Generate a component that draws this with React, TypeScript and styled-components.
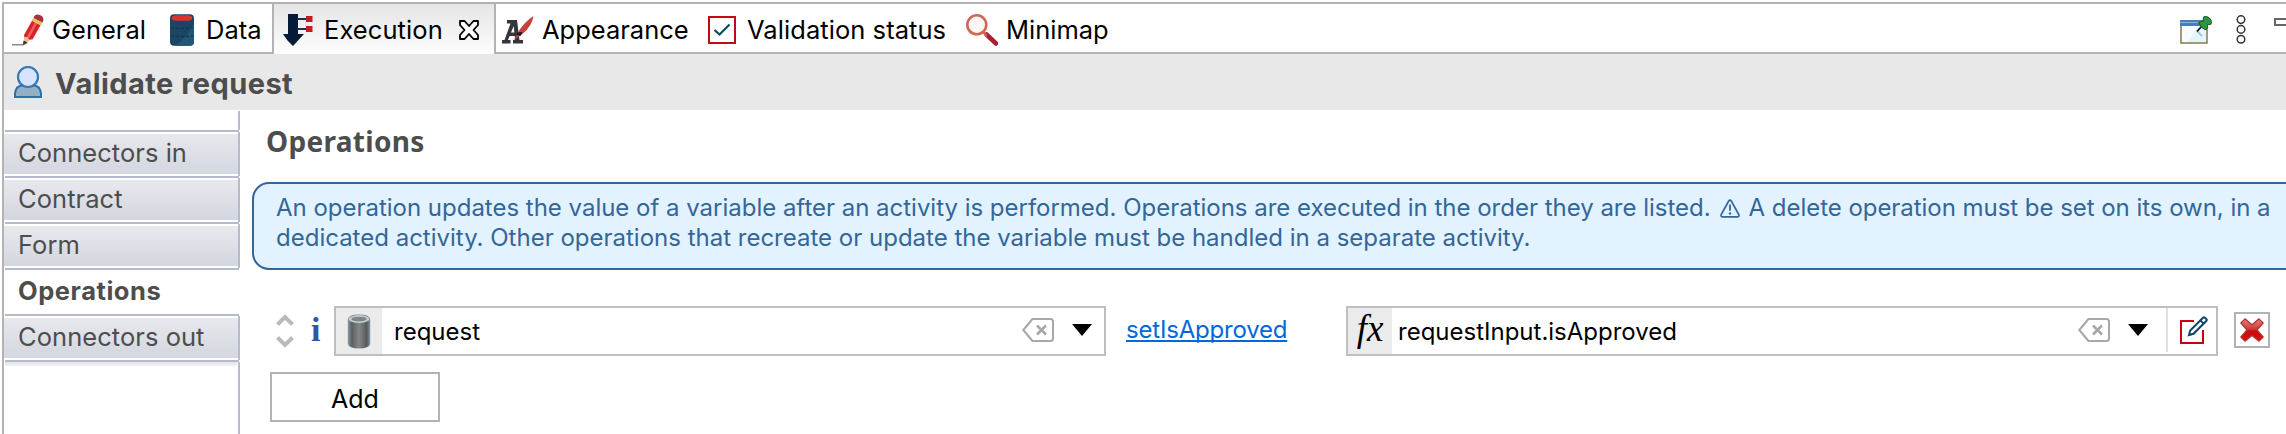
import React from "react";
import styled, { createGlobalStyle } from "styled-components";

const Global = createGlobalStyle`
  html, body { margin: 0; padding: 0; background: #fff; }
  body { width: 2286px; height: 434px; overflow: hidden; font-family: Inter, "Liberation Sans", sans-serif; }
  * { box-sizing: border-box; }
  svg { display: block; flex: none; }
`;

const Label = styled.span<{ $size?: number; $track?: number; $weight?: number; $color?: string; $family?: string }>`
  font-size: ${(p) => p.$size ?? 25.5}px;
  letter-spacing: ${(p) => p.$track ?? 0}px;
  font-weight: ${(p) => p.$weight ?? 400};
  color: ${(p) => p.$color ?? "#000"};
  ${(p) => (p.$family ? `font-family: ${p.$family};` : "")}
  line-height: 30px;
  white-space: pre;
`;

const Panel = styled.div`
  width: 2284px;
  height: 432px;
  margin: 2px 0 0 2px;
  border-top: 2px solid #b3b3b3;
  border-left: 2px solid #b3b3b3;
  display: flex;
  flex-direction: column;
  overflow: hidden;
`;

const TabBar = styled.div`
  height: 50px;
  flex: none;
  display: flex;
`;

const Tab = styled.div<{ $width: number; $pad: number; $gap: number; $active?: boolean }>`
  width: ${(p) => p.$width}px;
  flex: none;
  display: flex;
  align-items: center;
  gap: ${(p) => p.$gap}px;
  padding: 4px 0 ${(p) => (p.$active ? 2 : 0)}px ${(p) => p.$pad}px;
  border: 0 solid #b3b3b3;
  border-width: ${(p) => (p.$active ? "0 2px" : "0 0 2px")};
  background: ${(p) => (p.$active ? "linear-gradient(#e5e5e5, #fdfdfd)" : "#fff")};
`;

const CloseSlot = styled.div`
  margin-left: 5px;
`;

const TabTools = styled.div`
  flex: 1;
  display: flex;
  align-items: center;
  justify-content: flex-end;
  padding-top: 4px;
  border-bottom: 2px solid #b3b3b3;
`;

const ToolGap = styled.div<{ $w: number }>`
  width: ${(p) => p.$w}px;
  flex: none;
`;

const MinimizeSlot = styled.div`
  padding-bottom: 16px;
`;

const Header = styled.div`
  height: 56px;
  flex: none;
  background: #e8e8e8;
  display: flex;
  align-items: center;
  gap: 13px;
  padding-left: 10px;
`;

const Title = styled(Label)`
  padding-top: 3px;
`;

const Body = styled.div`
  flex: 1;
  display: flex;
  min-height: 0;
`;

const Sidebar = styled.div`
  width: 236px;
  flex: none;
  display: flex;
  flex-direction: column;
`;

const SideSpacer = styled.div`
  height: 19px;
  margin-top: 1px;
  flex: none;
  border-right: 2px solid #b6bacd;
`;

const Rule = styled.div`
  height: 2px;
  margin: 0 1px;
  flex: none;
  background: #b6bacd;
`;

const SideItem = styled.div<{ $active?: boolean }>`
  height: 44px;
  flex: none;
  padding: ${(p) => (p.$active ? "0 0 2px 14px" : "2px 0")};
  border-right: ${(p) => (p.$active ? "0" : "2px solid #b6bacd")};
  display: flex;
  align-items: center;
`;

const SideFill = styled.div`
  height: 40px;
  flex: 1;
  padding: 0 0 2px 14px;
  display: flex;
  align-items: center;
  background: linear-gradient(#e8e9ed, #d4d6e0);
`;

const SideShadow = styled.div`
  height: 4px;
  width: 232px;
  margin-left: 1px;
  flex: none;
  background: linear-gradient(#e2e2e2, #f2f2f2);
`;

const SideFoot = styled.div`
  flex: 1;
  display: flex;
  flex-direction: column;
  border-right: 2px solid #b6bacd;
`;

const Content = styled.div`
  flex: 1;
  min-width: 0;
  display: flex;
  flex-direction: column;
`;

const SectionTitle = styled.div`
  height: 72px;
  flex: none;
  padding: 16px 0 0 26px;
`;

const Notice = styled.div`
  height: 88px;
  width: 2080px;
  flex: none;
  margin-left: 12px;
  padding: 9px 0 0 22px;
  border: 2px solid #336699;
  border-radius: 17px;
  background: #e2f3ff;
  display: flex;
  flex-direction: column;
`;

const NoticeLine = styled.div`
  height: 30px;
  display: flex;
  align-items: center;
`;

const OperationRow = styled.div`
  height: 50px;
  flex: none;
  margin-top: 36px;
  padding-left: 36px;
  display: flex;
  align-items: center;
`;

const Mover = styled.div`
  width: 35px;
  display: flex;
  flex-direction: column;
  gap: 10px;
`;

const InfoMark = styled.div`
  width: 23px;
  padding-bottom: 2px;
`;

const Combo = styled.div<{ $width: number }>`
  width: ${(p) => p.$width}px;
  height: 50px;
  flex: none;
  border: 2px solid #bfbfbf;
  display: flex;
  align-items: center;
`;

const TypeCell = styled.div<{ $width: number; $lift?: number }>`
  width: ${(p) => p.$width}px;
  height: 46px;
  flex: none;
  padding-bottom: ${(p) => p.$lift ?? 0}px;
  background: #ebebeb;
  display: flex;
  align-items: center;
  justify-content: center;
`;

const ComboText = styled.div<{ $pad: number }>`
  flex: 1;
  display: flex;
  padding: 1px 0 0 ${(p) => p.$pad}px;
`;

const ComboActions = styled.div<{ $gap: number; $end: number }>`
  display: flex;
  align-items: center;
  gap: ${(p) => p.$gap}px;
  padding: 0 ${(p) => p.$end}px 2px 0;
`;

const EditCell = styled.div`
  width: 50px;
  height: 44px;
  margin-bottom: 2px;
  padding-left: 12px;
  border-left: 2px solid #e0e0e0;
  display: flex;
  align-items: center;
`;

const LinkCell = styled.div`
  width: 240px;
  padding: 0 0 2px 20px;
  flex: none;
  display: flex;
`;

const LinkText = styled(Label)`
  text-decoration: underline;
  text-decoration-thickness: 2px;
  text-underline-offset: 2px;
  text-decoration-skip-ink: none;
`;

const DeleteButton = styled.div`
  width: 36px;
  height: 36px;
  margin-left: 16px;
  margin-bottom: 2px;
  flex: none;
  border: 2px solid #b3b3b3;
  display: flex;
  align-items: center;
  justify-content: center;
`;

const AddButton = styled.div`
  width: 170px;
  height: 50px;
  flex: none;
  margin: 16px 0 0 30px;
  padding-top: 4px;
  border: 2px solid #b3b3b3;
  display: flex;
  align-items: center;
  justify-content: center;
`;

const PencilIcon = () => (
  <svg width="32" height="32" viewBox="0 0 32 32">
    <path d="M0 30.8H11L15 28.5" stroke="#8a8a8a" strokeWidth="1.6" fill="none" />
    <path d="M12 20.5L20 24.5L12 30.5Z" fill="#e9bd94" />
    <path d="M11.5 26.5L15.5 28.5L11 31Z" fill="#3c3030" />
    <path d="M12 21L21 5L29.500 9.500L20.500 25.500L17 25.500L15.500 23L12.500 23Z" fill="#d9232c" />
    <path d="M15 22.500L24 6.500L26 7.500L17 24.500Z" fill="#f0605a" />
    <path d="M20 7L21.500 4L30.500 8.500L29 11.800Z" fill="#e8c05f" />
    <path d="M21.500 4Q22.500 .5 26 .6Q31.500 1.500 31.500 6L30.500 8.500Z" fill="#a8323a" />
  </svg>
);

const DatabaseIcon = () => (
  <svg width="24" height="32" viewBox="0 0 24 32">
    <path d="M0 4Q0 .5 4 .3H20Q24 .5 24 4V28Q24 31.500 20 31.700H4Q0 31.500 0 28Z" fill="#1c4563" />
    <path d="M24 9V28Q24 31.700 20 31.700H5Q17 24 24 9Z" fill="#235675" />
    <path d="M1.500 4Q2 1.500 6 1.300H18Q22 1.500 22.500 4Q22 6.700 18 6.800H6Q2 6.700 1.500 4Z" fill="#d9342c" />
    <path d="M1 13.500Q12 15.500 23 13.500M1 21.500Q12 23.500 23 21.500" stroke="#12334d" strokeWidth="1.200" strokeDasharray="3 2" fill="none" />
  </svg>
);

const ExecutionIcon = () => (
  <svg width="30" height="32" viewBox="0 0 30 32">
    <path d="M5 0H15V20H21L15 26.500L10 32L4.500 26.500L0 20H5Z" fill="#041a38" />
    <path d="M14 5H24M14 15H24" stroke="#16324f" strokeWidth="2" />
    <path d="M23 2H29.500V8H23ZM23 12H29.500V18H23Z" fill="#c01f22" />
  </svg>
);

const CloseIcon = () => (
  <svg width="20" height="20" viewBox="0 0 20 20">
    <path d="M1 1H5.500L10 6L14.500 1H19V5L14.500 10L19 15V19H14.500L10 14L5.500 19H1V15L5.500 10L1 5Z" fill="#fff" stroke="#000" strokeWidth="1.800" strokeLinejoin="round" />
  </svg>
);

const AppearanceIcon = () => (
  <svg width="32" height="28" viewBox="0 0 32 28">
    <path d="M5 4H15L17.500 24H21V27.500H11V24H13L12.700 20H7.500L6 24H8.500V27.500H0V24H2.500L8.500 7.500H5Z" fill="#34363b" />
    <path d="M9 16.500H12.300L11.800 10Z" fill="#fff" />
    <path d="M12 24Q14 20 16 16.500Q22 6 31.500 0Q30 10 21 17.500Q16 21 12 24Z" fill="#c6423d" />
    <path d="M15.500 16.500L20.500 16L18.500 20L14.500 19Z" fill="#20151a" />
  </svg>
);

const ValidationIcon = () => (
  <svg width="28" height="28" viewBox="0 0 28 28">
    <rect x="1" y="1" width="26" height="26" fill="#fff" stroke="#c00a14" strokeWidth="2" />
    <path d="M6.500 14L11.500 18.500L21.500 8.500" stroke="#0e4a68" strokeWidth="2.200" fill="none" />
  </svg>
);

const MagnifierIcon = () => (
  <svg width="32" height="32" viewBox="0 0 32 32">
    <path d="M20.500 20.500L30 29.500" stroke="#a81f33" strokeWidth="4.500" strokeLinecap="round" />
    <path d="M16 17L21 22" stroke="#d0604f" strokeWidth="2.400" />
    <circle cx="10.800" cy="10.800" r="9.500" fill="#fdf6f4" stroke="#cf6656" strokeWidth="2.600" />
  </svg>
);

const PinViewIcon = () => (
  <svg width="32" height="28" viewBox="0 0 32 28">
    <rect x="1" y="5" width="26" height="22" fill="#e6f4fd" stroke="#91825c" strokeWidth="1.600" />
    <path d="M2 10H18L8 26H2Z" fill="#f8fcff" />
    <rect x="0" y="4" width="25" height="6" fill="#4a7ab8" />
    <path d="M0 6.500H24" stroke="#88aedb" strokeWidth="1.200" />
    <path d="M17 15L22 20" stroke="#a9c6da" strokeWidth="2" />
    <path d="M17 15.500L22 10" stroke="#111" strokeWidth="1.800" />
    <path d="M18.500 6.500Q20 5 23 5.500L23.500 1Q26 -1 29.500 2Q33 5.500 31 8.300L27.500 8.800Q28.500 12.500 26 14Q21.500 13 18.500 6.500Z" fill="#2f9440" stroke="#176326" strokeWidth="1" />
  </svg>
);

const MenuIcon = () => (
  <svg width="10" height="30" viewBox="0 0 10 30">
    {[4.6, 14.4, 24.2].map((cy) => (
      <circle key={cy} cx="5" cy={cy} r="3.800" fill="#fff" stroke="#333" strokeWidth="1.500" />
    ))}
  </svg>
);

const MinimizeIcon = () => (
  <svg width="12" height="8" viewBox="0 0 12 8">
    <rect x="1" y="1" width="16" height="6" fill="#fff" stroke="#666" strokeWidth="2" />
  </svg>
);

const PersonIcon = () => (
  <svg width="28" height="32" viewBox="0 0 28 32">
    <path d="M1 31V27Q2 20 8 19.500H20Q26 20 27 27V31Z" fill="#93afc4" stroke="#2d70aa" strokeWidth="2" />
    <circle cx="14" cy="11" r="10" fill="#d8e3ff" stroke="#3478b4" strokeWidth="2.200" />
  </svg>
);

const Chevron = ({ down }: { down?: boolean }) => (
  <svg width="18" height="12" viewBox="0 0 18 12">
    <path d={down ? "M1.500 1.500L9 9L16.500 1.500" : "M1.500 10.500L9 3L16.500 10.500"} stroke="#bababa" strokeWidth="4" fill="none" />
  </svg>
);

const CylinderIcon = () => (
  <svg width="24" height="35" viewBox="0 0 24 35">
    <defs>
      <linearGradient id="steel" x1="0" x2="1" y1="0" y2="0">
        <stop offset="0" stopColor="#8b9aa3" />
        <stop offset=".18" stopColor="#5c6063" />
        <stop offset=".5" stopColor="#85888a" />
        <stop offset=".85" stopColor="#56595c" />
        <stop offset="1" stopColor="#8297a5" />
      </linearGradient>
    </defs>
    <path d="M.8 5Q2 .8 12 .6Q22 .8 23.200 5V30Q22 34.300 12 34.500Q2 34.300 .8 30Z" fill="url(#steel)" />
    <ellipse cx="12" cy="5" rx="10.500" ry="4" fill="#c3cacd" />
    <ellipse cx="12" cy="5" rx="7.500" ry="2.300" fill="#7f8588" />
  </svg>
);

const ClearIcon = () => (
  <svg width="32" height="24" viewBox="0 0 32 24">
    <path d="M10.500 1H28.500Q31 1 31 3.500V20.500Q31 23 28.500 23H10.500L1.300 12Z" stroke="#a8a8a8" strokeWidth="2" fill="#fff" strokeLinejoin="round" />
    <path d="M15 7.500L24 16.500M24 7.500L15 16.500" stroke="#a8a8a8" strokeWidth="2.600" />
  </svg>
);

const ArrowIcon = () => (
  <svg width="20" height="12" viewBox="0 0 20 12">
    <path d="M0 0H20L10 12Z" fill="#000" />
  </svg>
);

const EditIcon = () => (
  <svg width="28" height="28" viewBox="0 0 28 28">
    <path d="M14 5H1V27H23V14" stroke="#c8000f" strokeWidth="2" fill="none" />
    <path d="M9 19L10.200 14.500L23 1.700Q24 .8 25 1.700L26.300 3Q27.200 4 26.300 5L13.500 17.800Z" stroke="#0b4763" strokeWidth="2" fill="#fff" />
    <path d="M20.500 4.500L23.500 7.500" stroke="#0b4763" strokeWidth="1.800" />
  </svg>
);

const DeleteIcon = () => (
  <svg width="24" height="24" viewBox="0 0 24 24">
    <defs>
      <linearGradient id="cross" x1="0" x2="0" y1="0" y2="1">
        <stop offset="0" stopColor="#e2807c" />
        <stop offset=".45" stopColor="#d23c38" />
        <stop offset=".55" stopColor="#cc0d0d" />
        <stop offset="1" stopColor="#d21212" />
      </linearGradient>
    </defs>
    <path d="M5 .8L12 6.800L19 .8L23.200 5L17 12L23.200 19L19 23.200L12 17.500L5 23.200L.8 19L7 12L.8 5Z" fill="url(#cross)" stroke="#b03430" strokeWidth="1.200" strokeLinejoin="round" />
  </svg>
);

const WarningIcon = () => (
  <svg width="20" height="19" viewBox="0 0 20 19">
    <path d="M8.700 2Q10 .2 11.300 2L18.800 15.500Q19.500 17.900 17.300 17.900H2.700Q.5 17.900 1.200 15.500Z" stroke="#336699" strokeWidth="1.700" fill="none" />
    <path d="M10 5.500V11.800" stroke="#336699" strokeWidth="1.800" />
    <circle cx="10" cy="14.500" r="1.200" fill="#336699" />
  </svg>
);

const WarningSlot = styled.span`
  display: flex;
  padding: 0 9px 0 9px;
`;

const GREY = "#4d4d4d";
const BLUE = "#336699";

const sidePages = [
  { name: "Connectors in" },
  { name: "Contract" },
  { name: "Form" },
  { name: "Operations", active: true },
  { name: "Connectors out" },
];

export default function App() {
  return (
    <>
      <Global />
      <Panel>
        <TabBar>
          <Tab $width={158} $pad={8} $gap={8}><PencilIcon /><Label>General</Label></Tab>
          <Tab $width={110} $pad={8} $gap={12}><DatabaseIcon /><Label>Data</Label></Tab>
          <Tab $width={224} $pad={9} $gap={11} $active>
            <ExecutionIcon /><Label $track={0.08}>Execution</Label><CloseSlot><CloseIcon /></CloseSlot>
          </Tab>
          <Tab $width={204} $pad={6} $gap={8}><AppearanceIcon /><Label>Appearance</Label></Tab>
          <Tab $width={258} $pad={8} $gap={11}><ValidationIcon /><Label $track={0.06}>Validation status</Label></Tab>
          <Tab $width={200} $pad={8} $gap={8}><MagnifierIcon /><Label>Minimap</Label></Tab>
          <TabTools>
            <PinViewIcon /><ToolGap $w={24} /><MenuIcon /><ToolGap $w={28} />
            <MinimizeSlot><MinimizeIcon /></MinimizeSlot>
          </TabTools>
        </TabBar>
        <Header>
          <PersonIcon />
          <Title $size={29} $weight={700} $color={GREY} $track={0.45}>Validate request</Title>
        </Header>
        <Body>
          <Sidebar>
            <SideSpacer />
            <Rule />
            {sidePages.map((page) => (
              <React.Fragment key={page.name}>
                <SideItem $active={page.active}>
                  {page.active ? (
                    <Label $weight={700} $color={GREY} $track={0.55}>{page.name}</Label>
                  ) : (
                    <SideFill><Label $color={GREY} $track={0.05}>{page.name}</Label></SideFill>
                  )}
                </SideItem>
                <Rule />
              </React.Fragment>
            ))}
            <SideFoot><SideShadow /></SideFoot>
          </Sidebar>
          <Content>
            <SectionTitle>
              <Label $size={28} $weight={700} $color={GREY} $track={0.3} $family={'"Noto Sans", sans-serif'}>Operations</Label>
            </SectionTitle>
            <Notice>
              <NoticeLine>
                <Label $size={24} $color={BLUE} $track={-0.015}>An operation updates the value of a variable after an activity is performed. Operations are executed in the order they are listed.</Label>
                <WarningSlot><WarningIcon /></WarningSlot>
                <Label $size={24} $color={BLUE} $track={-0.04}>A delete operation must be set on its own, in a</Label>
              </NoticeLine>
              <NoticeLine>
                <Label $size={24} $color={BLUE}>dedicated activity. Other operations that recreate or update the variable must be handled in a separate activity.</Label>
              </NoticeLine>
            </Notice>
            <OperationRow>
              <Mover><Chevron /><Chevron down /></Mover>
              <InfoMark>
                <Label $size={34} $weight={700} $color="#3355a5" $family={'"Liberation Serif", serif'}>i</Label>
              </InfoMark>
              <Combo $width={772}>
                <TypeCell $width={46}><CylinderIcon /></TypeCell>
                <ComboText $pad={12}><Label $size={24}>request</Label></ComboText>
                <ComboActions $gap={18} $end={12}><ClearIcon /><ArrowIcon /></ComboActions>
              </Combo>
              <LinkCell><LinkText $size={24} $color="#0069d9" $track={-0.2}>setIsApproved</LinkText></LinkCell>
              <Combo $width={872}>
                <TypeCell $width={44} $lift={5}>
                  <Label $size={37} $family={'"Liberation Serif", serif'}><i>fx</i></Label>
                </TypeCell>
                <ComboText $pad={6}><Label $size={24}>requestInput.isApproved</Label></ComboText>
                <ComboActions $gap={18} $end={18}><ClearIcon /><ArrowIcon /></ComboActions>
                <EditCell><EditIcon /></EditCell>
              </Combo>
              <DeleteButton><DeleteIcon /></DeleteButton>
            </OperationRow>
            <AddButton><Label $size={25}>Add</Label></AddButton>
          </Content>
        </Body>
      </Panel>
    </>
  );
}
